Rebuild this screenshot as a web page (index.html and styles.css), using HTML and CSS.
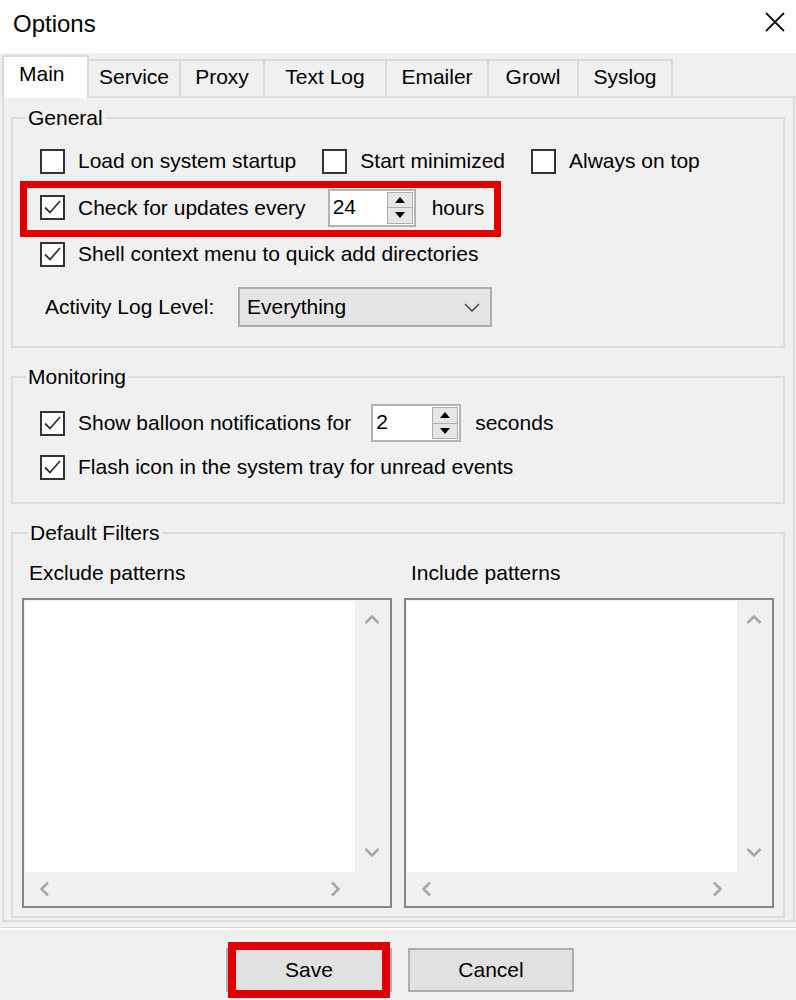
FILE: index.html
```html
<!DOCTYPE html>
<html lang="en">
<head>
    <meta charset="UTF-8">
    <title>Options</title>
    <link rel="stylesheet" href="styles.css">
</head>
<body>
    <div class="dialog">
        <header class="titlebar">
            <span class="title">Options</span>
            <svg class="close" width="20" height="20" viewBox="0 0 20 20"><path d="M1 1L19 19M19 1L1 19" stroke="#111" stroke-width="1.8" fill="none"/></svg>
        </header>

        <nav class="tabs">
            <span class="tab active tab-main">Main</span>
            <span class="tab tab-service">Service</span>
            <span class="tab tab-proxy">Proxy</span>
            <span class="tab tab-textlog">Text Log</span>
            <span class="tab tab-emailer">Emailer</span>
            <span class="tab tab-growl">Growl</span>
            <span class="tab tab-syslog">Syslog</span>
        </nav>

        <section class="tabpage">
            <fieldset class="group general">
                <legend>General</legend>
                <div class="row row-options">
                    <label class="check"><span class="box"></span>Load on system startup</label>
                    <label class="check"><span class="box"></span>Start minimized</label>
                    <label class="check"><span class="box"></span>Always on top</label>
                </div>
                <div class="row row-tall">
                    <div class="marked">
                        <label class="check"><span class="box checked"><svg viewBox="0 0 21 21" width="21" height="21"><path d="M3 10.5l5 5L18 4" fill="none" stroke="#333" stroke-width="1.8"/></svg></span>Check for updates every</label>
                        <span class="spin spin-hours">
                            <span class="spin-value">24</span>
                            <span class="spin-btns"><span class="spin-btn"><i class="arrow-up"></i></span><span class="spin-btn"><i class="arrow-down"></i></span></span>
                        </span>
                        <span class="unit">hours</span>
                        <span class="mark"></span>
                    </div>
                </div>
                <div class="row">
                    <label class="check"><span class="box checked"><svg viewBox="0 0 21 21" width="21" height="21"><path d="M3 10.5l5 5L18 4" fill="none" stroke="#333" stroke-width="1.8"/></svg></span>Shell context menu to quick add directories</label>
                </div>
                <div class="row row-field">
                    <span class="field-label">Activity Log Level:</span>
                    <span class="combo">
                        <span>Everything</span>
                        <svg width="16" height="9" viewBox="0 0 16 9"><path d="M1 1l7 7 7-7" fill="none" stroke="#444" stroke-width="1.5"/></svg>
                    </span>
                </div>
            </fieldset>

            <fieldset class="group monitoring">
                <legend>Monitoring</legend>
                <div class="row">
                    <label class="check"><span class="box checked"><svg viewBox="0 0 21 21" width="21" height="21"><path d="M3 10.5l5 5L18 4" fill="none" stroke="#333" stroke-width="1.8"/></svg></span>Show balloon notifications for</label>
                    <span class="spin spin-seconds">
                        <span class="spin-value">2</span>
                        <span class="spin-btns"><span class="spin-btn"><i class="arrow-up"></i></span><span class="spin-btn"><i class="arrow-down"></i></span></span>
                    </span>
                    <span class="unit">seconds</span>
                </div>
                <div class="row">
                    <label class="check"><span class="box checked"><svg viewBox="0 0 21 21" width="21" height="21"><path d="M3 10.5l5 5L18 4" fill="none" stroke="#333" stroke-width="1.8"/></svg></span>Flash icon in the system tray for unread events</label>
                </div>
            </fieldset>

            <fieldset class="group filters">
                <legend>Default Filters</legend>
                <div class="filter">
                    <div class="filter-label">Exclude patterns</div>
                    <div class="listbox">
                        <div class="list-area"></div>
                        <div class="vscroll">
                            <svg width="16" height="9" viewBox="0 0 16 9"><path d="M1.5 8l6.5-6.5 6.5 6.5" fill="none" stroke="#a6a6a6" stroke-width="2.5"/></svg>
                            <svg width="16" height="9" viewBox="0 0 16 9"><path d="M1.5 1l6.5 6.5 6.5-6.5" fill="none" stroke="#a6a6a6" stroke-width="2.5"/></svg>
                        </div>
                        <div class="hscroll">
                            <svg width="9" height="16" viewBox="0 0 9 16"><path d="M8 1.5L1.5 8 8 14.5" fill="none" stroke="#a6a6a6" stroke-width="2.5"/></svg>
                            <svg width="9" height="16" viewBox="0 0 9 16"><path d="M1 1.5L7.5 8 1 14.5" fill="none" stroke="#a6a6a6" stroke-width="2.5"/></svg>
                        </div>
                        <div class="corner"></div>
                    </div>
                </div>
                <div class="filter">
                    <div class="filter-label">Include patterns</div>
                    <div class="listbox">
                        <div class="list-area"></div>
                        <div class="vscroll">
                            <svg width="16" height="9" viewBox="0 0 16 9"><path d="M1.5 8l6.5-6.5 6.5 6.5" fill="none" stroke="#a6a6a6" stroke-width="2.5"/></svg>
                            <svg width="16" height="9" viewBox="0 0 16 9"><path d="M1.5 1l6.5 6.5 6.5-6.5" fill="none" stroke="#a6a6a6" stroke-width="2.5"/></svg>
                        </div>
                        <div class="hscroll">
                            <svg width="9" height="16" viewBox="0 0 9 16"><path d="M8 1.5L1.5 8 8 14.5" fill="none" stroke="#a6a6a6" stroke-width="2.5"/></svg>
                            <svg width="9" height="16" viewBox="0 0 9 16"><path d="M1 1.5L7.5 8 1 14.5" fill="none" stroke="#a6a6a6" stroke-width="2.5"/></svg>
                        </div>
                        <div class="corner"></div>
                    </div>
                </div>
            </fieldset>
        </section>

        <footer class="buttons">
            <button class="btn">Save<span class="mark"></span></button>
            <button class="btn">Cancel</button>
        </footer>
    </div>
</body>
</html>
```

FILE: styles.css
```css
* {
    box-sizing: border-box;
}
body {
    margin: 0;
    font-family: "Liberation Sans", Arial, sans-serif;
    font-size: 21px;
    color: #000;
    background: #f0f0f0;
}
.dialog {
    width: 796px;
    height: 1000px;
    overflow: hidden;
    background: #f0f0f0;
}

/* title bar */
.titlebar {
    height: 53px;
    background: #fff;
    display: flex;
    justify-content: space-between;
    align-items: flex-start;
    padding: 10px 11px 0 13px;
}
.title {
    font-size: 24px;
    line-height: 28px;
}
.close {
    margin-top: 2px;
}

/* tabs */
.tabs {
    display: flex;
    align-items: flex-end;
    height: 43px;
    padding-left: 2px;
}
.tab {
    height: 37px;
    padding-top: 4px;
    line-height: 24px;
    text-align: center;
    border: 2px solid #d9d9d9;
    border-bottom: 0;
    margin-left: -2px;
    background: #f0f0f0;
}
.tab.active {
    position: relative;
    z-index: 1;
    height: 43px;
    margin-bottom: -2px;
    margin-left: 0;
    padding-top: 5px;
    padding-left: 15px;
    text-align: left;
    background: #fff;
}
.tab-main { width: 87px; }
.tab-service { width: 94px; }
.tab-proxy { width: 86px; }
.tab-textlog { width: 124px; }
.tab-emailer { width: 104px; }
.tab-growl { width: 92px; }
.tab-syslog { width: 96px; }

.tabpage {
    margin: 0 1px 0 2px;
    height: 826px;
    border: 2px solid #dcdcdc;
    padding: 8px 8px 0 7px;
}

/* group boxes */
.group {
    margin: 0;
    padding: 0;
    border: 2px solid #dcdcdc;
    min-width: 0;
}
.group legend {
    margin-left: 13px;
    padding: 0 2px;
    line-height: 24px;
}
.general {
    padding: 8px 0 9px;
}
.monitoring {
    margin-top: 17px;
    padding: 12px 0 13px;
}
.filters {
    margin-top: 17px;
    padding: 16px 9px 8px;
    display: grid;
    grid-template-columns: 1fr 1fr;
    column-gap: 12px;
}
.filters legend {
    margin-left: 6px;
}

.row {
    display: flex;
    align-items: center;
    height: 46px;
    padding-left: 27px;
}
.monitoring .row {
    height: 44px;
}
.row-options {
    gap: 26px;
}
.row-tall {
    height: 47px;
    align-items: stretch;
}
.row-field {
    height: 60px;
    padding-left: 32px;
}

.check {
    display: flex;
    align-items: center;
    gap: 13px;
    white-space: nowrap;
}
.box {
    width: 25px;
    height: 25px;
    flex: none;
    border: 2px solid #333;
    background: #fff;
}
.box svg {
    display: block;
}

/* red annotation frames */
.marked {
    position: relative;
    display: flex;
    align-items: center;
}
.mark {
    position: absolute;
    left: -20px;
    right: -17px;
    top: -3px;
    bottom: -6px;
    border: 7px solid #e00000;
}

/* numeric up/down */
.spin {
    display: flex;
    width: 88px;
    height: 38px;
    border: 2px solid #b4b4b4;
    background: #fff;
}
.spin-hours {
    margin: 0 16px 0 22px;
}
.spin-seconds {
    width: 90px;
    margin: 0 14px 0 20px;
}
.spin-value {
    flex: 1;
    padding-left: 3px;
    line-height: 32px;
}
.spin-btns {
    width: 27px;
    display: flex;
    flex-direction: column;
    padding: 1px 1px 1px 0;
}
.spin-btn {
    flex: 1;
    display: flex;
    align-items: center;
    justify-content: center;
    background: #e6e6e6;
    border: 1px solid #adadad;
}
.spin-btn + .spin-btn {
    border-top: 0;
}
.arrow-up {
    border-left: 5px solid transparent;
    border-right: 5px solid transparent;
    border-bottom: 6px solid #000;
}
.arrow-down {
    border-left: 5px solid transparent;
    border-right: 5px solid transparent;
    border-top: 6px solid #000;
}

/* combo box */
.field-label {
    width: 193px;
    flex: none;
}
.combo {
    width: 254px;
    height: 40px;
    display: flex;
    align-items: center;
    justify-content: space-between;
    padding: 0 10px 0 7px;
    background: #e5e5e5;
    border: 2px solid #adadad;
}

/* pattern lists */
.filter-label {
    line-height: 24px;
    padding-left: 7px;
}
.listbox {
    margin-top: 13px;
    height: 310px;
    border: 2px solid #858585;
    padding: 1px;
    background: #f0f0f0;
    display: grid;
    grid-template-columns: 1fr 34px;
    grid-template-rows: 1fr 33px;
}
.list-area {
    background: #fff;
}
.vscroll {
    display: flex;
    flex-direction: column;
    justify-content: space-between;
    align-items: center;
    padding: 14px 0 15px;
}
.hscroll {
    display: flex;
    justify-content: space-between;
    align-items: center;
    padding: 0 15px 0 15px;
}

/* bottom buttons */
.buttons {
    margin-top: 5px;
    border-top: 1px solid #dadada;
    box-shadow: inset 0 2px 0 #fff;
    padding: 20px 0 0 4px;
    display: flex;
    justify-content: center;
    gap: 16px;
}
.btn {
    position: relative;
    width: 166px;
    height: 44px;
    font-family: inherit;
    font-size: 21px;
    color: #000;
    background: #e1e1e1;
    border: 2px solid #adadad;
    padding: 0;
}
.btn .mark {
    left: 0;
    right: 0;
    top: -8px;
    bottom: -8px;
    border-width: 8px;
}
```
